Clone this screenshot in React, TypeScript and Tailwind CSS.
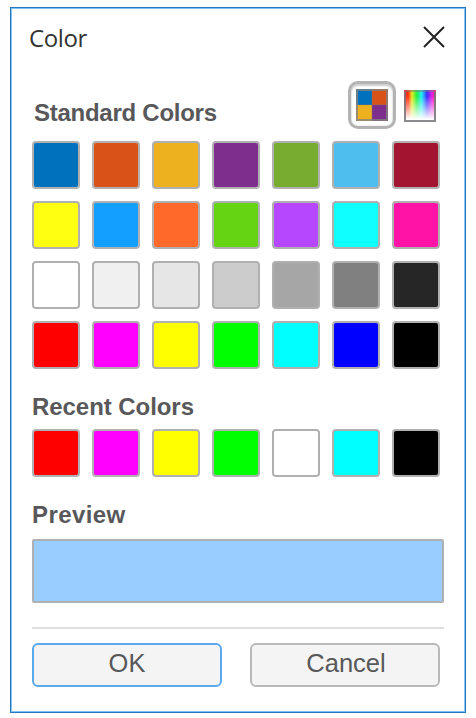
const standardColors: string[] = [
  '#0072bd', '#d95319', '#edb120', '#7e2f8e', '#77ac30', '#4dbeee', '#a2142f',
  '#ffff11', '#139fff', '#ff6929', '#64d413', '#b746ff', '#0fffff', '#ff13a6',
  '#ffffff', '#f0f0f0', '#e6e6e6', '#cccccc', '#a6a6a6', '#808080', '#262626',
  '#ff0000', '#ff00ff', '#ffff00', '#00ff00', '#00ffff', '#0000ff', '#000000',
];

const recentColors: string[] = [
  '#ff0000', '#ff00ff', '#ffff00', '#00ff00', '#ffffff', '#00ffff', '#000000',
];

function SwatchGrid({ colors }: { colors: string[] }) {
  return (
    <div className="grid w-[408px] grid-cols-7 gap-3">
      {colors.map((color) => (
        <button
          key={color}
          aria-label={color}
          className="size-12 rounded-[4px] border-2 border-[#b0b0b0]"
          style={{ backgroundColor: color }}
        />
      ))}
    </div>
  );
}

function PaletteIcon() {
  return (
    <svg className="size-8" viewBox="0 0 32 32">
      <rect width="16" height="16" fill="#0072bd" />
      <rect x="16" width="16" height="16" fill="#d95319" />
      <rect y="16" width="16" height="16" fill="#edb120" />
      <rect x="16" y="16" width="16" height="16" fill="#7e2f8e" />
      <path d="M16 0V32M0 15.7H32" stroke="#77736f" strokeOpacity=".6" strokeWidth=".7" />
      <rect x="1" y="1" width="30" height="30" fill="none" stroke="#85827f" strokeOpacity=".8" strokeWidth="2" />
    </svg>
  );
}

function SpectrumIcon() {
  return (
    <svg className="size-8" viewBox="0 0 32 32">
      <defs>
        <linearGradient id="hue">
          <stop offset="0" stopColor="#ff2020" />
          <stop offset=".14" stopColor="#ff3a10" />
          <stop offset=".25" stopColor="#e5ef20" />
          <stop offset=".4" stopColor="#20f044" />
          <stop offset=".55" stopColor="#20eef5" />
          <stop offset=".72" stopColor="#3c2cff" />
          <stop offset=".88" stopColor="#ee20e8" />
          <stop offset="1" stopColor="#ff2060" />
        </linearGradient>
        <linearGradient id="fade" x2="0" y2="1">
          <stop offset=".2" stopColor="#fff" stopOpacity="0" />
          <stop offset=".92" stopColor="#fff" stopOpacity="1" />
        </linearGradient>
      </defs>
      <rect width="32" height="32" fill="url(#hue)" />
      <rect width="32" height="32" fill="url(#fade)" />
      <path d="M1 2V31H31V2" fill="none" stroke="#77777b" strokeOpacity=".85" strokeWidth="2" />
      <path d="M0 1H32" stroke="#77777b" strokeOpacity=".5" strokeWidth="2" />
    </svg>
  );
}

export default function App() {
  return (
    <div className="h-[718px] w-[476px] bg-[#fefefe] pl-[10px] pt-[7px] font-['Liberation_Sans',sans-serif] text-[#58585a]">
      <div className="h-[706px] w-[456px] border border-[#2478be] bg-white">
        <div className="h-full border border-[#87c1f4] pl-5">
          <header className="flex h-[60px] items-start justify-between pr-[19px]">
            <h1 className="-ml-[3px] pt-[12px] font-['Open_Sans',sans-serif] text-[24px] leading-[33px] tracking-[-0.4px] text-[#333]">Color</h1>
            <button aria-label="Close" className="mt-[17px]">
              <svg className="size-[22px]" viewBox="0 0 22 22">
                <path d="M1 1L21 21M21 1L1 21" stroke="#222" strokeWidth="2" />
              </svg>
            </button>
          </header>

          <div className="mt-[12px] flex h-[49px]">
            <h2 className="ml-0.5 w-[314px] pt-[18px] text-[24px] font-bold leading-7 tracking-[-0.26px]">Standard Colors</h2>
            <button aria-label="Standard palette" className="flex size-12 items-center justify-center rounded-[10px] border-[3px] border-[#b3b3b3] bg-white shadow-[inset_0_2px_2px_#ccc,inset_0_0_2px_#ccc]">
              <PaletteIcon />
            </button>
            <button aria-label="Custom colors" className="ml-2 flex items-center">
              <SpectrumIcon />
            </button>
          </div>

          <div className="mt-[11px]">
            <SwatchGrid colors={standardColors} />
          </div>

          <h2 className="mt-6 h-9 text-[24px] font-bold leading-7 tracking-[-0.06px]">Recent Colors</h2>
          <SwatchGrid colors={recentColors} />

          <h2 className="mt-6 h-[38px] text-[24px] font-bold leading-7 tracking-[0.4px]">Preview</h2>
          <div className="h-16 w-[412px] rounded-[2px] border-2 border-[#adb1b5] bg-[#99ccff]" />

          <div className="mt-6 h-0.5 w-[412px] bg-[#dedede]" />
          <div className="mt-[14px] flex gap-7">
            <button className="h-11 w-[190px] rounded-[6px] border-2 border-[#5ba9ec] bg-[#f4f4f4] pb-0.5 text-[25.5px] leading-none">OK</button>
            <button className="h-11 w-[190px] rounded-[6px] border-2 border-[#b9b9b9] bg-[#f4f4f4] pb-0.5 pl-0.5 text-[25.5px] leading-none">Cancel</button>
          </div>
        </div>
      </div>
    </div>
  );
}
